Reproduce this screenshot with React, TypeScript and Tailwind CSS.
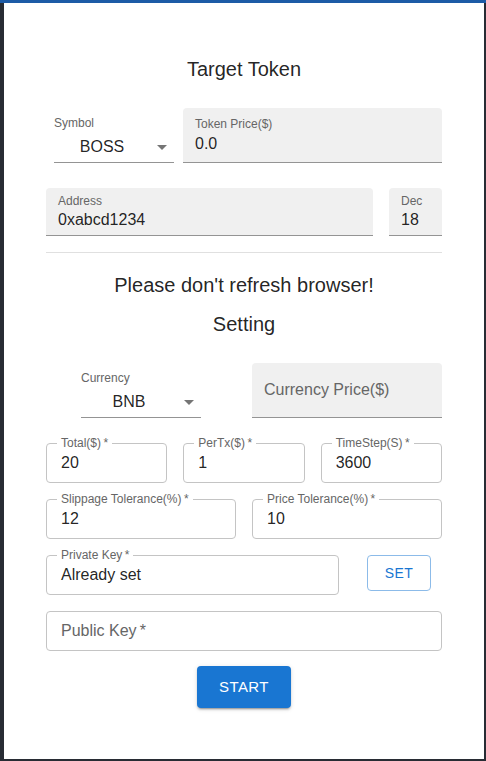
import React from 'react';

const font = { fontFamily: '"Liberation Sans", Arial, Helvetica, sans-serif' };

const ArrowDrop = () => (
  <svg viewBox="0 0 24 24" className="h-[24px] w-[24px] shrink-0 fill-[rgba(0,0,0,0.54)]">
    <path d="M7 10l5 5 5-5z" />
  </svg>
);

const StandardSelect: React.FC<{ label: string; value: string }> = ({ label, value }) => (
  <div className="flex h-[55px] w-[120px] flex-col">
    <div className="mt-[7px] text-[12px] leading-[16px] text-[#666]">{label}</div>
    <div className="flex flex-1 items-center border-b border-[#949494]">
      <span className="flex-1 pl-[0px] text-center text-[16px] leading-[20px] text-[rgba(0,0,0,0.87)]">{value}</span>
      <ArrowDrop />
    </div>
  </div>
);

const FilledField: React.FC<{ label: string; value: string; dense?: boolean; className?: string }> = ({
  label,
  value,
  dense,
  className = '',
}) => (
  <div
    className={`flex flex-col rounded-t-[4px] border-b border-[#949494] bg-[#f0f0f0] px-[12px] ${
      dense ? 'h-[48px] pt-[5px]' : 'h-[55px] pt-[8px]'
    } ${className}`}
  >
    <div className="text-[12px] leading-[16px] text-[#666]">{label}</div>
    <div className={`text-[16px] leading-[20px] text-[rgba(0,0,0,0.87)] ${dense ? 'mt-[1px]' : 'mt-[2px]'}`}>
      {value}
    </div>
  </div>
);

const OutlinedField: React.FC<{ label: string; value: string; className?: string }> = ({
  label,
  value,
  className = '',
}) => (
  <div className={`relative flex h-[40px] items-center rounded-[4px] border border-[#c4c4c4] px-[14px] ${className}`}>
    <span className="absolute -top-[9px] left-[10px] bg-white px-[4px] text-[12px] leading-[16px] text-[#666]">
      {label}
      {'\u2009*'}
    </span>
    <span className="text-[16px] leading-[20px] text-[rgba(0,0,0,0.87)]">{value}</span>
  </div>
);

export default function App() {
  return (
    <div className="flex h-[761px] flex-col border-t-[3px] border-[#1d5ba6] bg-[#282c34]" style={font}>
      <div className="ml-[4px] mr-[2px] h-[756px] bg-white px-[42px]">
        <h2 className="mt-[52px] text-center text-[20px] leading-[28px] text-[rgba(0,0,0,0.87)]">Target Token</h2>

        <div className="mt-[25px] flex">
          <div className="ml-[8px]">
            <StandardSelect label="Symbol" value="BOSS" />
          </div>
          <FilledField label="Token Price($)" value="0.0" className="ml-[9px] flex-1" />
        </div>

        <div className="mt-[25px] flex gap-4">
          <FilledField label="Address" value="0xabcd1234" dense className="flex-1" />
          <FilledField label="Dec" value="18" dense className="w-[53px]" />
        </div>

        <div className="mt-[16px] h-px bg-[#e0e0e0]" />

        <p className="mt-[18px] text-center text-[20px] leading-[28px] text-[rgba(0,0,0,0.87)]">
          Please don't refresh browser!
        </p>
        <h3 className="mt-[11px] text-center text-[20px] leading-[28px] text-[rgba(0,0,0,0.87)]">Setting</h3>

        <div className="mt-[25px] grid grid-cols-2 gap-4">
          <div className="flex justify-center">
            <StandardSelect label="Currency" value="BNB" />
          </div>
          <div className="flex h-[55px] items-center rounded-t-[4px] border-b border-[#949494] bg-[#f0f0f0] px-[12px] text-[16px] text-[#666]">
            Currency Price($)
          </div>
        </div>

        <div className="mt-[25px] grid grid-cols-3 gap-4">
          <OutlinedField label="Total($)" value="20" />
          <OutlinedField label="PerTx($)" value="1" />
          <OutlinedField label="TimeStep(S)" value="3600" />
        </div>

        <div className="mt-[16px] grid grid-cols-2 gap-4">
          <OutlinedField label="Slippage Tolerance(%)" value="12" />
          <OutlinedField label="Price Tolerance(%)" value="10" />
        </div>

        <div className="mt-[16px] flex items-start">
          <OutlinedField label="Private Key" value="Already set" className="w-[293px]" />
          <button className="ml-[28px] h-[36px] w-[64px] rounded-[4px] border border-[#8cbbe9] text-[14px] font-medium uppercase tracking-[0.4px] text-[#1976d2]">
            Set
          </button>
        </div>

        <div className="mt-[16px] flex h-[40px] items-center rounded-[4px] border border-[#c4c4c4] px-[14px] text-[16px] text-[#666]">
          Public Key{'\u2009*'}
        </div>

        <div className="mt-[15px] flex justify-center">
          <button className="h-[42px] w-[94px] rounded-[4px] bg-[#1976d2] text-[15px] font-medium uppercase tracking-[0.4px] text-white shadow-[0_3px_1px_-2px_rgba(0,0,0,0.2),0_2px_2px_0_rgba(0,0,0,0.14),0_1px_5px_0_rgba(0,0,0,0.12)]">
            Start
          </button>
        </div>
      </div>
    </div>
  );
}
